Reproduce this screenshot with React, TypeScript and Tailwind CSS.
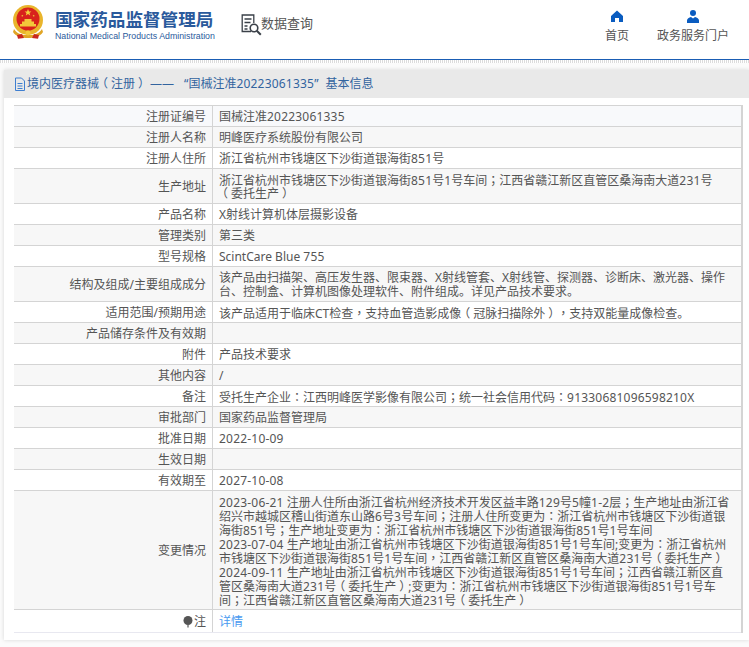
const rows: { label: string; lines: string[]; bg: string }[] = [
  { label: "注册证编号", lines: ["国械注准20223061335"], bg: "bg-[#f8f9fb]" },
  { label: "注册人名称", lines: ["明峰医疗系统股份有限公司"], bg: "bg-[#f7f7f7]" },
  { label: "注册人住所", lines: ["浙江省杭州市钱塘区下沙街道银海街851号"], bg: "bg-white" },
  {
    label: "生产地址",
    lines: ["浙江省杭州市钱塘区下沙街道银海街851号1号车间；江西省赣江新区直管区桑海南大道231号", "（委托生产）"],
    bg: "bg-[#f7f7f7]",
  },
  { label: "产品名称", lines: ["X射线计算机体层摄影设备"], bg: "bg-white" },
  { label: "管理类别", lines: ["第三类"], bg: "bg-[#f7f7f7]" },
  { label: "型号规格", lines: ["ScintCare Blue 755"], bg: "bg-white" },
  {
    label: "结构及组成/主要组成成分",
    lines: ["该产品由扫描架、高压发生器、限束器、X射线管套、X射线管、探测器、诊断床、激光器、操作", "台、控制盒、计算机图像处理软件、附件组成。详见产品技术要求。"],
    bg: "bg-[#f7f7f7]",
  },
  { label: "适用范围/预期用途", lines: ["该产品适用于临床CT检查，支持血管造影成像（冠脉扫描除外），支持双能量成像检查。"], bg: "bg-white" },
  { label: "产品储存条件及有效期", lines: [""], bg: "bg-[#f7f7f7]" },
  { label: "附件", lines: ["产品技术要求"], bg: "bg-white" },
  { label: "其他内容", lines: ["/"], bg: "bg-[#f7f7f7]" },
  { label: "备注", lines: ["受托生产企业：江西明峰医学影像有限公司；统一社会信用代码：91330681096598210X"], bg: "bg-white" },
  { label: "审批部门", lines: ["国家药品监督管理局"], bg: "bg-[#f7f7f7]" },
  { label: "批准日期", lines: ["2022-10-09"], bg: "bg-white" },
  { label: "生效日期", lines: [""], bg: "bg-[#f7f7f7]" },
  { label: "有效期至", lines: ["2027-10-08"], bg: "bg-white" },
  {
    label: "变更情况",
    lines: [
      "2023-06-21 注册人住所由浙江省杭州经济技术开发区益丰路129号5幢1-2层；生产地址由浙江省",
      "绍兴市越城区稽山街道东山路6号3号车间；注册人住所变更为：浙江省杭州市钱塘区下沙街道银",
      "海街851号；生产地址变更为：浙江省杭州市钱塘区下沙街道银海街851号1号车间",
      "2023-07-04 生产地址由浙江省杭州市钱塘区下沙街道银海街851号1号车间;变更为：浙江省杭州",
      "市钱塘区下沙街道银海街851号1号车间，江西省赣江新区直管区桑海南大道231号（委托生产）",
      "2024-09-11 生产地址由浙江省杭州市钱塘区下沙街道银海街851号1号车间；江西省赣江新区直",
      "管区桑海南大道231号（委托生产）;变更为：浙江省杭州市钱塘区下沙街道银海街851号1号车",
      "间；江西省赣江新区直管区桑海南大道231号（委托生产）",
    ],
    bg: "bg-[#f7f7f7]",
  },
];

// punctuation sits centred in the original font, digits run a touch wider
const Text = ({ value }: { value: string }) => (
  <>
    {value.split(/([；：，（）]|[0-9-]+)/).map((part, i) => {
      if (!part) return null;
      if (part === "（") {
        return <span key={i} className="inline-block -translate-x-[3px]">{part}</span>;
      }
      if (part === "）") {
        return <span key={i} className="inline-block translate-x-[3px]">{part}</span>;
      }
      if (/^[；：，]$/.test(part)) {
        return (
          <span key={i} className="inline-block [font-family:'Noto_Sans_CJK_TC',sans-serif]">
            {part}
          </span>
        );
      }
      if (/^[0-9-]+$/.test(part)) {
        return (
          <span key={i} className="inline-block tracking-[0.2px]">
            {part}
          </span>
        );
      }
      return part;
    })}
  </>
);

const Emblem = () => (
  <svg width="32" height="34" viewBox="0 0 32 34">
    <circle cx="16" cy="15" r="15" fill="#e9b52c" />
    <circle cx="16" cy="14" r="11.5" fill="#d8221c" />
    <path d="M16 4l1 2.4 2.4.1-1.9 1.5.7 2.4-2.2-1.4-2.2 1.4.7-2.4-1.9-1.5 2.4-.1z" fill="#f5cf3c" />
    <path d="M9.5 10l.8.3.5-.6v.8l.7.4-.8.2-.2.8-.4-.7-.8.1.5-.6zM22.5 10l-.8.3-.5-.6v.8l-.7.4.8.2.2.8.4-.7.8.1-.5-.6z" fill="#f5cf3c" />
    <path d="M8 19h16v2.5H8zM10 16.5h12V19H10zM12.5 14h7v2.5h-7z" fill="#f3c93a" />
    <path d="M2 24c4 6 9 6 14 6s10 0 14-6l1 3c-3 5-9 6-15 6S4 32 1 27z" fill="#e0a526" />
    <path d="M5 30l5-1 2 4-6 .8zM27 30l-5-1-2 4 6 .8z" fill="#c9271f" />
    <circle cx="16" cy="28" r="2.5" fill="#f3c93a" />
  </svg>
);

const DocSearchIcon = () => (
  <svg width="21" height="22" viewBox="0 0 21 22" fill="none" stroke="#3a4048" strokeWidth="1.3">
    <path d="M10 17.5H1.2V1h11.6v8" />
    <path d="M3.5 5h7M3.5 8.5h6M3.5 12h3M3.5 15h3" />
    <circle cx="13" cy="14" r="3.8" strokeWidth="1.6" />
    <path d="M15.8 16.8l4 4" strokeWidth="2" />
  </svg>
);

const HomeIcon = () => (
  <svg width="12" height="12" viewBox="0 0 12 12" fill="#0a5cc0">
    <path d="M6 .5L12 6v6H8V8H4v4H0V6z" />
  </svg>
);

const UserIcon = () => (
  <svg width="12" height="13" viewBox="0 0 12 13" fill="#0a5cc0">
    <circle cx="6" cy="3" r="3" />
    <path d="M0 13v-2.5C0 8.5 2 7.5 4 7l2 1.5L8 7c2 .5 4 1.5 4 3.5V13z" />
  </svg>
);

const TitleIcon = () => (
  <svg width="10" height="14" viewBox="0 0 10 14" fill="none" stroke="#3f7fd0" strokeWidth="1" className="shrink-0">
    <path d="M.5 1h6l3 3v9.5h-9z" />
    <path d="M2.5 6.5h5M2.5 9h5M2.5 11.5h5" />
  </svg>
);

const Row = ({ label, lines, bg }: { label: string; lines: string[]; bg: string }) => (
  <div className={`flex border-b border-[#d4d4d4] ${bg}`}>
    <div className="w-[199px] shrink-0 flex items-center justify-end pr-[6px] pt-[4px] pb-[2px] border-r border-[#d4d4d4] text-[#555] min-h-[20px]">
      {label}
    </div>
    <div className="flex-1 pl-[6px] pt-[4px] pb-[2px] text-[#555] whitespace-nowrap">
      {lines.map((line, i) => (
        <div key={i} className="h-[14px]">
          <Text value={line} />
        </div>
      ))}
    </div>
  </div>
);

export default function App() {
  return (
    <div className="w-[749px] h-[647px] overflow-hidden bg-[#fbfbfb] text-[12px] leading-[14px] [font-family:'Noto_Sans','Noto_Sans_CJK_SC',sans-serif]">
      <header className="h-[59px] bg-white flex items-start">
        <div className="w-[55px] pl-3 pt-[5px] shrink-0">
          <Emblem />
        </div>
        <div className="w-[170px] pt-[8px] shrink-0">
          <div className="text-[#2a5a9c] text-[17.6px] leading-[22px] font-bold whitespace-nowrap">国家药品监督管理局</div>
          <div className="text-[#2a5a9c] text-[8.8px] leading-[12px] whitespace-nowrap [font-family:'Liberation_Sans',sans-serif]">
            National Medical Products Administration
          </div>
        </div>
        <div className="flex items-center pl-[16px] pt-[14px]">
          <DocSearchIcon />
          <span className="text-[#555] text-[13px] leading-[20px] -ml-px -mt-[4px]">数据查询</span>
        </div>
        <nav className="ml-auto flex pt-[10px] pr-[20px]">
          <div className="flex flex-col items-center w-[24px] mr-[28px]">
            <HomeIcon />
            <span className="text-[#555] leading-[16px] mt-[6px] whitespace-nowrap">首页</span>
          </div>
          <div className="flex flex-col items-center w-[72px]">
            <UserIcon />
            <span className="text-[#555] leading-[16px] mt-[5px] whitespace-nowrap">政务服务门户</span>
          </div>
        </nav>
      </header>
      <div className="h-[1px] bg-[#1a5db4]" />
      <div className="h-[3px] bg-[repeating-linear-gradient(90deg,#dcdcdc_0,#dcdcdc_1px,#fff_1px,#fff_2px)]" />
      <main className="pt-[7px] pl-[4px]">
        <section className="bg-white shadow-[0_0_4px_rgba(0,0,0,0.15)] h-[570px]">
          <div className="h-[28px] bg-[#e9e9e9] flex items-center pl-[11px] text-[#32649f] whitespace-nowrap">
            <TitleIcon />
            <span className="ml-[2px]">
              <Text value="境内医疗器械（注册）" />
            </span>
            <span className="ml-[3px]">——</span>
            <span className="ml-[10px]">
              “<Text value="国械注准20223061335" />”
            </span>
            <span className="ml-[7px]">基本信息</span>
          </div>
          <div className="ml-[10px] w-[729px] mt-[7px] border-t border-r-2 border-[#d4d4d4]">
            {rows.map((row) => (
              <Row key={row.label} {...row} />
            ))}
            <div className="flex border-b border-[#e8e8f0] bg-white">
              <div className="w-[199px] shrink-0 flex items-center justify-end pr-[6px] pt-[4px] pb-[2px] border-r border-[#d4d4d4] text-[#555] h-[22px]">
                <svg width="10" height="12" viewBox="0 0 10 12" className="mr-[1px]">
                  <ellipse cx="5" cy="4.5" rx="4.5" ry="4.5" fill="#555" />
                  <path d="M4 9h2v2.5H4z" fill="#999" />
                </svg>
                注
              </div>
              <div className="flex-1 pl-[6px] pt-[5px] pb-[1px] text-[#4a9af0]">详情</div>
            </div>
          </div>
        </section>
      </main>
    </div>
  );
}
